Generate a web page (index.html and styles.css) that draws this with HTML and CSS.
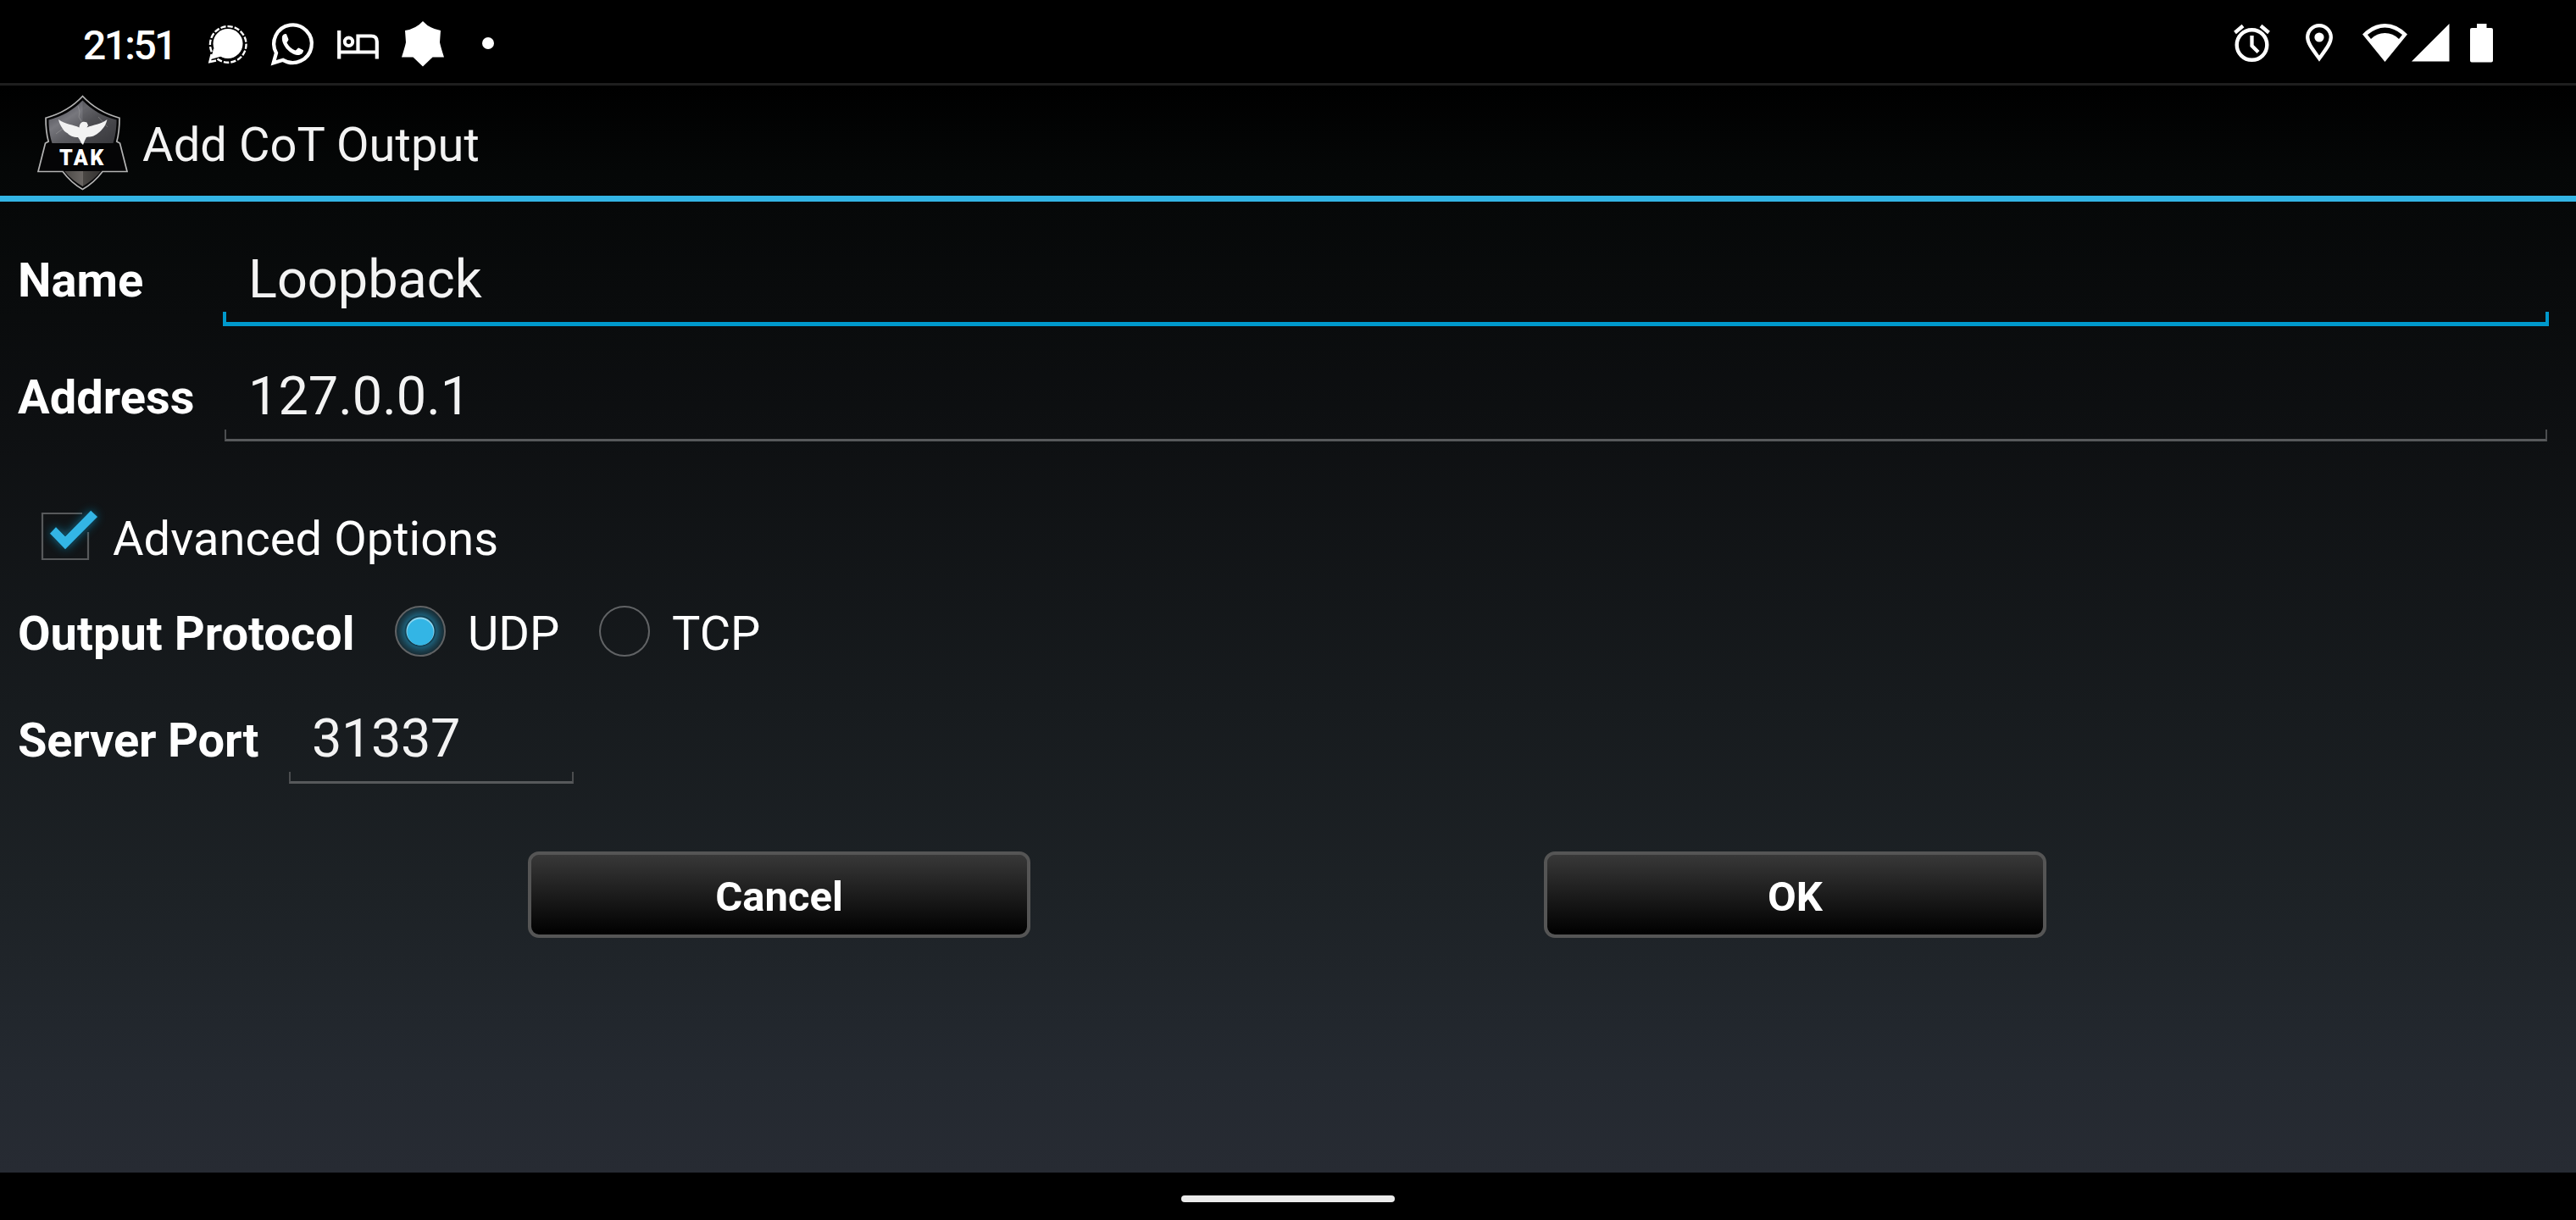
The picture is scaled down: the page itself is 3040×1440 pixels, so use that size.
FILE: index.html
```html
<!DOCTYPE html>
<html lang="en">
<head>
<meta charset="utf-8">
<title>Add CoT Output</title>
<link rel="stylesheet" href="styles.css">
</head>
<body>
<header class="status">
  <span class="clock">21:51</span>
  <div class="notifications">
    <svg class="signal" width="46" height="47" viewBox="0 0 46 47">
      <circle cx="23" cy="22.500" r="17.500" fill="#fff"/>
      <path d="M6 28L3 41L17 37Z" fill="#fff"/>
      <path d="M10.500 40.500A21.300 21.300 0 1 0 4.200 33" fill="none" stroke="#fff" stroke-width="2.400" stroke-dasharray="6.300 2"/>
      <path d="M3.700 35L1.500 44L9 42.500" fill="none" stroke="#fff" stroke-width="2.600"/>
    </svg>
    <svg class="whatsapp" width="50" height="50" viewBox="0 0 50 50">
      <path d="M2.700 47.300L6 35.500A22.300 22.300 0 1 1 14 43.800Z" fill="none" stroke="#fff" stroke-width="4.300"/>
      <path d="M13 16C14 13.500 16 12.700 18 13.200L20.500 19.500C20.500 21 18.500 22.500 18.500 23.500C21 28 24 30.500 28.500 32.500C30 32.500 31 29.500 32.500 29.500L38 32.300C38.200 36 34.500 38.500 31 38C22 37 11.500 26 13 16Z" fill="#fff"/>
    </svg>
    <svg class="bed" width="50" height="34" viewBox="0 0 50 34">
      <path d="M2.200 0V33.500M2.200 25.500H46.800M24.500 25.500V6.500H40Q46.800 6.500 46.800 13V33.500" fill="none" stroke="#fff" stroke-width="4.200"/>
      <circle cx="13.500" cy="13.300" r="4.700" fill="none" stroke="#fff" stroke-width="4"/>
    </svg>
    <svg class="star" width="50" height="54" viewBox="0 0 50 54">
      <path d="M25 0Q33 9 46 11L45 25Q46 30 50 42.500H36.500L25 53.500L13.500 42.500H0Q4 30 5 25L4 11Q17 9 25 0Z" fill="#fff"/>
    </svg>
    <i class="more"></i>
  </div>
  <div class="system">
    <svg class="alarm" width="44" height="46" viewBox="0 0 44 46">
      <circle cx="21.500" cy="25" r="17.800" fill="none" stroke="#fff" stroke-width="4.400"/>
      <path d="M21.500 14V26L29 33.500M1.500 10.500L11 2.500M32 2.500L41.500 10.500" fill="none" stroke="#fff" stroke-width="4.300"/>
    </svg>
    <svg class="pin" width="32" height="46" viewBox="0 0 32 46">
      <path d="M16 41C8 30 2.200 23 2.200 16A13.800 13.800 0 0 1 29.800 16C29.800 23 24 30 16 41Z" fill="none" stroke="#fff" stroke-width="4.300"/>
      <circle cx="16" cy="16" r="5.600" fill="#fff"/>
    </svg>
    <svg class="wifi" width="54" height="46" viewBox="0 0 54 46">
      <path fill="#fff" fill-rule="evenodd" d="M0 12.500Q12 0 26.500 0T53 12.500L26.500 45ZM6 13L10 18Q17 11 26.500 11T43 18L47 13Q37 4.500 26.500 4.500T6 13Z"/>
    </svg>
    <svg class="cell" width="45" height="45" viewBox="0 0 45 45"><path d="M0 44.500L44.500 0V44.500Z" fill="#fff"/></svg>
    <svg class="battery" width="28" height="46" viewBox="0 0 28 46"><path d="M8 0H19.500V5H25Q27 5 27 7V43.500Q27 45.500 25 45.500H2Q0 45.500 0 43.500V7Q0 5 2 5H8Z" fill="#fff"/></svg>
  </div>
</header>

<main class="screen">
  <div class="titlebar">
    <svg class="logo" width="108" height="114" viewBox="0 0 108 114">
      <defs>
        <linearGradient id="steel" x1="0" y1="0" x2="1" y2="1">
          <stop offset="0" stop-color="#3c3c44"/><stop offset=".35" stop-color="#77777d"/>
          <stop offset=".55" stop-color="#5c5c61"/><stop offset="1" stop-color="#424247"/>
        </linearGradient>
        <linearGradient id="tip" x1="0" y1="0" x2="1" y2="0">
          <stop offset="0" stop-color="#4b4845"/><stop offset=".5" stop-color="#6a6663"/><stop offset=".52" stop-color="#4a4744"/><stop offset="1" stop-color="#343231"/>
        </linearGradient>
      </defs>
      <path d="M53.500 1.500C65 14 78 22 97 27.200C97 38 96 47 93.800 55L97.500 57L106 90.500H77C71 98.500 63 106 53.500 111.500C44 106 36 98.500 30 90.500H1L9.500 57L13.200 55C11 47 10 38 10 27.200C29 22 42 14 53.500 1.500Z" fill="#050506" stroke="#b4b4b4" stroke-width="1.700"/>
      <path d="M53.500 6.500C66 19 77 25 93.500 29.500C93.500 41 92 49 89.500 57H17.500C15 49 13.500 41 13.500 29.500C30 25 41 19 53.500 6.500Z" fill="url(#steel)"/>
      <path d="M53.500 6.500V57H89.500Q93.500 44 93.500 29.500Q68 21 53.500 6.500Z" fill="#000" opacity=".14"/>
      <path d="M32 90H75Q67 100 53.500 108Q40 100 32 90Z" fill="url(#tip)"/>
      <path d="M48 13L50 20L49 26L52 31M22 46L30 40M72 26L83 38" fill="none" stroke="#aaa" stroke-width=".7" opacity=".6"/>
      <path d="M25 29C33 35 43 35 49.500 38.500C50 33 53 30.500 58.500 32.500L60 36L58.500 38.500C66 35 75 35 82.500 29C81 35 79 38 77 40C75 43 72 45 70 46.500C65 50 61 49 58 50L56 54L54 59L52 57L50 53L48 50C42 50 38 48 36 45.500C33 44 31 42 30 40C28 37 26 34 25 29Z" fill="#f2f2f2"/>
      <text class="logo-word" x="26" y="82.500">TAK</text>
    </svg>
    <h1 class="title">Add CoT Output</h1>
  </div>

  <form class="form">
    <div class="row row-name">
      <label class="label">Name</label>
      <div class="field focused"><span class="value">Loopback</span><i class="bracket"></i></div>
    </div>
    <div class="row row-address">
      <label class="label">Address</label>
      <div class="field"><span class="value">127.0.0.1</span><i class="bracket"></i></div>
    </div>
    <div class="row row-advanced">
      <svg class="check" width="84" height="80" viewBox="0 0 84 80">
        <defs><filter id="glow" x="-50%" y="-50%" width="200%" height="200%"><feGaussianBlur stdDeviation="6"/></filter></defs>
        <path d="M57 11H10V65H64V33" fill="none" stroke="#57595b" stroke-width="2.200"/>
        <path d="M19 34.700L26 27.300L37 38.300L67.200 7.700L75 15L37 53.300Z" fill="#1787b0" opacity=".8" filter="url(#glow)"/>
        <path d="M19 34.700L26 27.300L37 38.300L67.200 7.700L75 15L37 53.300Z" fill="#33b5e5" stroke="#0b3341" stroke-width="1.500" paint-order="stroke"/>
      </svg>
      <span class="text">Advanced Options</span>
    </div>
    <div class="row row-protocol">
      <label class="label">Output Protocol</label>
      <i class="radio on"></i><span class="text udp">UDP</span>
      <i class="radio"></i><span class="text">TCP</span>
    </div>
    <div class="row row-port">
      <label class="label">Server Port</label>
      <div class="field"><span class="value">31337</span><i class="bracket"></i></div>
    </div>
    <div class="actions">
      <button type="button" class="button">Cancel</button>
      <button type="button" class="button">OK</button>
    </div>
  </form>
</main>
<footer class="nav"><i class="pill"></i></footer>
</body>
</html>
```
FILE: styles.css
```css
* { box-sizing: border-box; }
body {
  margin: 0;
  width: 3040px;
  height: 1440px;
  overflow: hidden;
  display: flex;
  flex-direction: column;
  background: #000;
  color: #fff;
  font-family: Roboto, "Liberation Sans", sans-serif;
}
svg { display: block; flex: none; overflow: visible; }

.status {
  height: 101px;
  flex: none;
  display: flex;
  align-items: flex-start;
  border-bottom: 3px solid #1e1e1e;
}
.clock {
  width: 148px;
  margin-left: 98px;
  padding-top: 24px;
  font-size: 48px;
  line-height: 60px;
  font-weight: 500;
  letter-spacing: -2.6px;
}
.notifications { display: flex; align-items: flex-start; }
.signal { margin-top: 29px; }
.whatsapp { margin: 27px 0 0 28px; }
.bed { margin: 36px 0 0 28px; }
.star { margin: 25px 0 0 26px; }
.more {
  width: 14px;
  height: 14px;
  margin: 44px 0 0 45px;
  border-radius: 50%;
  background: #fff;
}
.system { display: flex; margin: 28px 97px 0 auto; }
.pin { margin-left: 41px; }
.wifi { margin-left: 35px; }
.cell { margin-left: 4px; }
.battery { margin-left: 24px; }

.screen {
  height: 1283px;
  flex: none;
  background: linear-gradient(#000 0%, #050707 8%, #0e1012 32%, #171b1e 57%, #1d2226 75%, #242930 91%, #272b33 100%);
}
.titlebar {
  height: 137px;
  display: flex;
  align-items: flex-start;
  padding: 11px 0 0 44px;
  border-bottom: 7px solid #33b5e5;
}
.logo-word {
  font: 900 25px Roboto, "Liberation Sans", sans-serif;
  letter-spacing: 2.5px;
  fill: #fff;
}
.title {
  margin: 26px 0 0 16px;
  font-size: 56px;
  line-height: 66px;
  font-weight: 400;
  letter-spacing: 0.1px;
  color: #f3f3f3;
}

.form { padding: 52px 32px 0 21px; }
.row { display: flex; align-items: flex-start; }
.label { font-size: 56px; line-height: 66px; font-weight: 700; white-space: nowrap; }
.text { font-size: 56px; line-height: 66px; white-space: nowrap; }
.field { flex: 1; display: flex; flex-direction: column; color: #f3f3f3; }
.value { height: 79px; padding-left: 28px; font-size: 63px; line-height: 80px; }
.bracket {
  height: 14px;
  border: 2px solid #4b4d4f;
  border-top: 0;
  border-bottom: 3px solid #57595b;
}
.focused .value { height: 78px; padding-left: 30px; }
.focused .bracket { height: 17px; border: 4px solid #0099cc; border-top: 0; border-bottom-width: 5px; }

.row-name { height: 138px; }
.row-name .label { width: 242px; padding-top: 8px; }
.row-address { height: 167px; padding-right: 2px; }
.row-address .label { width: 244px; padding-top: 8px; }
.row-advanced { height: 120px; padding-left: 19px; }
.row-advanced .text { margin: 8px 0 0 9px; letter-spacing: 0.05px; }
.row-protocol { height: 117px; }
.row-protocol .label { width: 445px; }
.radio {
  width: 60px;
  height: 60px;
  flex: none;
  border: 2px solid #616365;
  border-radius: 50%;
}
.on {
  background:
    radial-gradient(circle at 50% 52%, #33b5e5 0 15px, transparent 16px),
    radial-gradient(circle, #8fd6ef 0 16px, #10394a 17px, #1c5a72 19px, #1a3d4b 24px, #172c35 28px);
}
.row-port { height: 173px; }
.row-port .label { width: 320px; padding-top: 9px; letter-spacing: -0.2px; }
.row-port .field { flex: none; width: 336px; }
.row-port .value { padding-left: 27px; letter-spacing: -0.4px; }
.row-protocol .text { margin-left: 26px; }
.row-protocol .udp { width: 155px; }

.actions { display: flex; gap: 606px; padding-left: 602px; }
.button {
  width: 593px;
  height: 102px;
  padding: 4px 0 0;
  border: 4px solid #555;
  border-radius: 13px;
  background: linear-gradient(#383838, #000) padding-box;
  color: #fff;
  font: 700 49px Roboto, "Liberation Sans", sans-serif;
}

.nav { height: 56px; display: flex; justify-content: center; padding-top: 27px; }
.pill { width: 252px; height: 8px; border-radius: 4px; background: #ebebeb; }
```
